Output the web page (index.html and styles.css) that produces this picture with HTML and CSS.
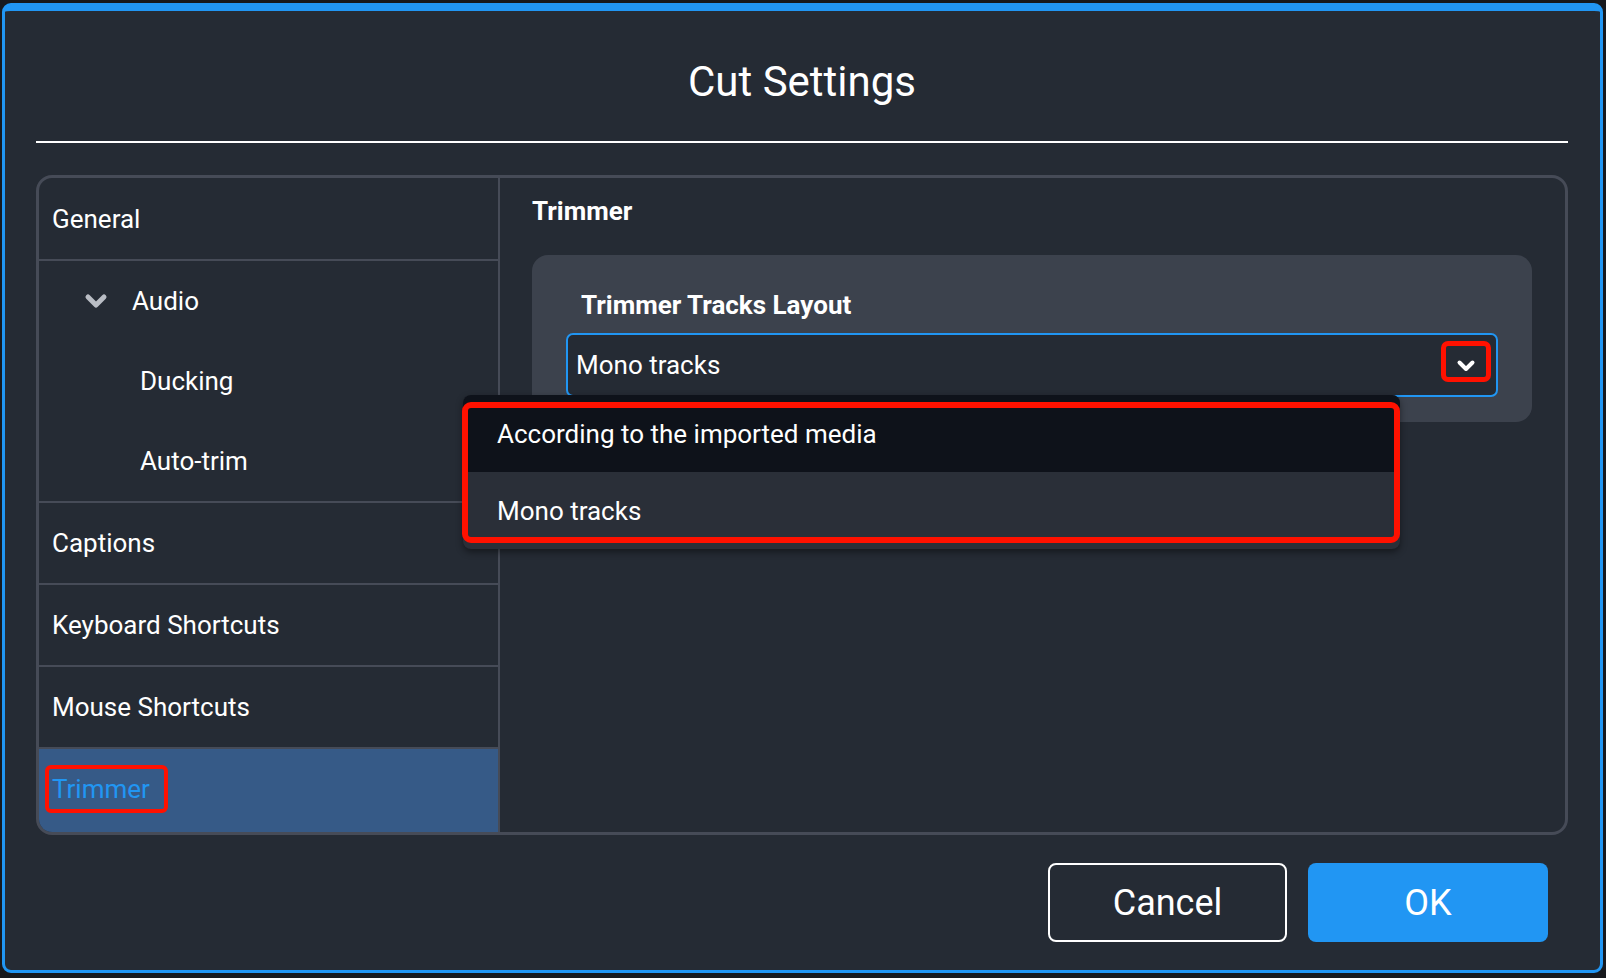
FILE: index.html
```html
<!DOCTYPE html>
<html lang="en">
<head>
<meta charset="utf-8">
<title>Cut Settings</title>
<link rel="stylesheet" href="styles.css">
</head>
<body>
<div class="backdrop">
  <div class="dialog" role="dialog" aria-labelledby="dlg-title">
    <header class="dialog-head">
      <h1 class="dialog-title" id="dlg-title">Cut Settings</h1>
    </header>

    <div class="panel">
      <nav class="sidebar">
        <div class="nav-item divided">General</div>
        <div class="nav-group">
          <div class="nav-item nav-parent">
            <svg class="nav-caret" width="24" height="16" viewBox="0 0 24 16" aria-hidden="true">
              <polyline points="4,4 12,12 20,4" fill="none" stroke="#b9bdc4" stroke-width="5" stroke-linecap="round" stroke-linejoin="round"/>
            </svg>
            <span>Audio</span>
          </div>
          <div class="nav-item nav-child">Ducking</div>
          <div class="nav-item nav-child">Auto-trim</div>
        </div>
        <div class="nav-item divided">Captions</div>
        <div class="nav-item divided">Keyboard Shortcuts</div>
        <div class="nav-item divided">Mouse Shortcuts</div>
        <div class="nav-item active"><span class="nav-mark">Trimmer</span></div>
      </nav>

      <section class="content">
        <h2 class="content-title">Trimmer</h2>
        <div class="card">
          <label class="field-label">Trimmer Tracks Layout</label>
          <div class="select">
            <span class="select-value">Mono tracks</span>
            <span class="select-caret">
              <svg width="20" height="14" viewBox="0 0 20 14" aria-hidden="true">
                <polyline points="3.5,3.5 10,10 16.5,3.5" fill="none" stroke="#ffffff" stroke-width="4" stroke-linecap="round" stroke-linejoin="round"/>
              </svg>
            </span>
            <ul class="menu">
              <li class="menu-item hover">According to the imported media</li>
              <li class="menu-item">Mono tracks</li>
            </ul>
          </div>
        </div>
      </section>
    </div>

    <footer class="actions">
      <button class="btn btn-outline" type="button">Cancel</button>
      <button class="btn btn-primary" type="button">OK</button>
    </footer>
  </div>
</div>
</body>
</html>
```

FILE: styles.css
```css
* {
  box-sizing: border-box;
}

html,
body {
  margin: 0;
  padding: 0;
}

body {
  background: #17191d;
  color: #ffffff;
  font-family: Roboto, "Liberation Sans", Arial, sans-serif;
}

.backdrop {
  height: 978px;
  padding: 3px 3px 5px 2px;
}

/* dialog frame */
.dialog {
  height: 100%;
  display: flex;
  flex-direction: column;
  background: #252b34;
  border: 3px solid #2196f3;
  border-top-width: 8px;
  border-radius: 9px;
  padding: 0 32px 0 31px;
}

.dialog-head {
  padding: 46px 0 34px;
  border-bottom: 2px solid #ffffff;
  text-align: center;
}

.dialog-title {
  margin: 0;
  font-size: 42px;
  font-weight: 400;
  line-height: 50px;
}

/* settings panel */
.panel {
  margin-top: 32px;
  height: 660px;
  flex: none;
  display: flex;
  border: 3px solid #464b57;
  border-radius: 16px;
  overflow: hidden;
}

.sidebar {
  width: 461px;
  flex: none;
  display: flex;
  flex-direction: column;
  padding-top: 1px;
  border-right: 2px solid #464b57;
}

.nav-item {
  height: 80px;
  flex: none;
  display: flex;
  align-items: center;
  padding-left: 13px;
  font-size: 26px;
  line-height: 30px;
}

.nav-item.divided {
  height: 82px;
  border-bottom: 2px solid #464b57;
}

.nav-group {
  border-bottom: 2px solid #464b57;
}

.nav-parent {
  padding-left: 45px;
}

.nav-caret {
  margin-right: 24px;
  flex: none;
}

.nav-child {
  padding-left: 101px;
}

.nav-item.active {
  flex: 1;
  padding-bottom: 3px;
  background: #365a87;
  color: #2196f3;
}

.nav-mark {
  display: inline-block;
  margin-left: -7px;
  padding: 0 14px 0 3px;
  line-height: 40px;
  border: 4px solid #ff1100;
  border-radius: 6px;
}

/* content side */
.content {
  flex: 1;
  padding: 18px 33px 0 32px;
}

.content-title {
  margin: 0;
  font-size: 26px;
  font-weight: 700;
  line-height: 30px;
}

.card {
  margin-top: 29px;
  background: #3c424d;
  border-radius: 16px;
  padding: 35px 34px 25px;
}

.field-label {
  display: block;
  padding-left: 15px;
  font-size: 26px;
  font-weight: 700;
  line-height: 30px;
}

.select {
  position: relative;
  margin-top: 13px;
  height: 64px;
  display: flex;
  align-items: center;
  padding: 0 5px 0 8px;
  background: #252b34;
  border: 2px solid #2196f3;
  border-radius: 7px;
}

.select-value {
  flex: 1;
  font-size: 26px;
  line-height: 30px;
}

.select-caret {
  align-self: flex-start;
  margin-top: 6px;
  width: 50px;
  height: 41px;
  display: flex;
  justify-content: center;
  align-items: flex-end;
  padding-bottom: 4px;
  border: 5px solid #ff1100;
  border-radius: 7px;
}

.select-caret svg {
  display: block;
}

/* open option list */
.menu {
  position: absolute;
  z-index: 5;
  top: 60px;
  left: -105px;
  width: 937px;
  margin: 0;
  padding: 0;
  list-style: none;
  background: #2a2f38;
  border-radius: 8px;
  box-shadow: 0 3px 7px rgba(0, 0, 0, 0.45);
}

.menu::after {
  content: "";
  position: absolute;
  top: 7px;
  bottom: 6px;
  left: -1px;
  right: 0;
  border: 6px solid #ff1100;
  border-radius: 9px;
  pointer-events: none;
}

.menu-item {
  height: 77px;
  display: flex;
  align-items: center;
  padding-left: 34px;
  font-size: 26px;
  line-height: 30px;
}

.menu-item.hover {
  background: #0e121a;
  border-radius: 8px 8px 0 0;
}

/* footer buttons */
.actions {
  display: flex;
  justify-content: flex-end;
  gap: 21px;
  padding: 28px 20px 28px 0;
}

.btn {
  width: 239px;
  height: 79px;
  border-radius: 8px;
  color: #ffffff;
  font-family: Roboto, "Liberation Sans", Arial, sans-serif;
  font-size: 36px;
  line-height: 40px;
  cursor: pointer;
}

.btn-outline {
  background: transparent;
  border: 2px solid #ffffff;
}

.btn-primary {
  width: 240px;
  background: #2196f3;
  border: 0;
}
```
